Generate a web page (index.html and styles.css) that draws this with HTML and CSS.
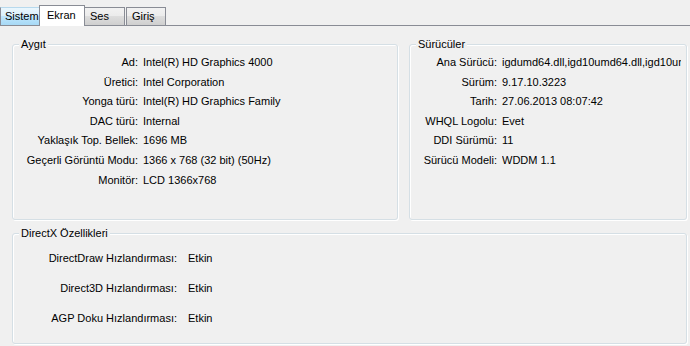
FILE: index.html
```html
<!DOCTYPE html>
<html lang="tr">
<head>
    <meta charset="UTF-8">
    <title>DirectX Tanı Aracı - Ekran</title>
    <link rel="stylesheet" href="styles.css">
</head>
<body>
    <div class="tabs">
        <div class="tab tab-hover">Sistem</div>
        <div class="tab tab-active">Ekran</div>
        <div class="tab tab-ses">Ses</div>
        <div class="tab tab-giris">Giriş</div>
    </div>

    <div class="panel">
        <div class="top-row">
            <div class="group group-device">
                <span class="group-title">Aygıt</span>
                <div class="rows rows-device">
                    <div class="lbl">Ad:</div><div class="val">Intel(R) HD Graphics 4000</div>
                    <div class="lbl">Üretici:</div><div class="val">Intel Corporation</div>
                    <div class="lbl">Yonga türü:</div><div class="val">Intel(R) HD Graphics Family</div>
                    <div class="lbl">DAC türü:</div><div class="val">Internal</div>
                    <div class="lbl">Yaklaşık Top. Bellek:</div><div class="val">1696 MB</div>
                    <div class="lbl">Geçerli Görüntü Modu:</div><div class="val">1366 x 768 (32 bit) (50Hz)</div>
                    <div class="lbl">Monitör:</div><div class="val">LCD 1366x768</div>
                </div>
            </div>
            <div class="group group-drivers">
                <span class="group-title">Sürücüler</span>
                <div class="rows rows-drivers">
                    <div class="lbl">Ana Sürücü:</div><div class="val">igdumd64.dll,igd10umd64.dll,igd10umd64.dll</div>
                    <div class="lbl">Sürüm:</div><div class="val">9.17.10.3223</div>
                    <div class="lbl">Tarih:</div><div class="val">27.06.2013 08:07:42</div>
                    <div class="lbl">WHQL Logolu:</div><div class="val">Evet</div>
                    <div class="lbl">DDI Sürümü:</div><div class="val">11</div>
                    <div class="lbl">Sürücü Modeli:</div><div class="val">WDDM 1.1</div>
                </div>
            </div>
        </div>

        <div class="group group-dx">
            <span class="group-title">DirectX Özellikleri</span>
            <div class="rows rows-dx">
                <div class="lbl">DirectDraw Hızlandırması:</div><div class="val">Etkin</div>
                <div class="lbl">Direct3D Hızlandırması:</div><div class="val">Etkin</div>
                <div class="lbl">AGP Doku Hızlandırması:</div><div class="val">Etkin</div>
            </div>
        </div>
    </div>
</body>
</html>
```

FILE: styles.css
```css
body {
    margin: 0;
    padding: 0;
    background-color: #f0f0f0;
    font-family: "Liberation Sans", Arial, sans-serif;
    font-size: 11px;
    color: #000;
    width: 690px;
    height: 346px;
    overflow: hidden;
}
.tabs {
    display: flex;
    align-items: flex-end;
    height: 25px;
    border-bottom: 1px solid #898c95;
}
.tab {
    box-sizing: border-box;
    height: 18px;
    line-height: 17px;
    padding-left: 5px;
    border: 1px solid #898c95;
    border-bottom: none;
    background: linear-gradient(#f2f2f2 0%, #ebebeb 50%, #dddddd 50%, #cfcfcf 100%);
    margin-bottom: 0;
}
.tab-hover {
    width: 40px;
    padding-left: 4px;
    border-top-color: #b7d9ed;
    background: linear-gradient(#eaf6fd 0%, #d9f0fc 50%, #bee6fd 50%, #a7d9f5 100%);
}
.tab-active {
    width: 46px;
    height: 21px;
    margin-left: -1px;
    margin-bottom: -1px;
    padding-left: 7px;
    line-height: 19px;
    background: #fff;
    position: relative;
}
.tab-ses {
    width: 41px;
    margin-left: -1px;
}
.tab-giris {
    width: 40px;
    margin-left: 1px;
}
.panel {
    padding: 18px 3px 0 12px;
}
.top-row {
    display: grid;
    grid-template-columns: 386px 278px;
    column-gap: 11px;
}
.group {
    position: relative;
    box-sizing: border-box;
    border: 1px solid #d5dfe5;
    border-radius: 3px;
    box-shadow: inset 1px 1px 0 #fff, 1px 1px 0 #fff;
}
.group-title {
    position: absolute;
    top: -7px;
    left: 6px;
    padding: 0 2px;
    line-height: 13px;
    background-color: #f0f0f0;
}
.group-device,
.group-drivers {
    height: 176px;
}
.group-dx {
    margin-top: 13px;
    height: 111px;
}
.rows {
    display: grid;
    white-space: nowrap;
}
.lbl {
    text-align: right;
}
.val {
    overflow: hidden;
}
.rows-device {
    grid-template-columns: 125px 1fr;
    grid-auto-rows: 19.6px;
    line-height: 19.6px;
    column-gap: 5px;
    padding-top: 8px;
}
.rows-drivers {
    grid-template-columns: 87px 1fr;
    grid-auto-rows: 19.6px;
    line-height: 19.6px;
    column-gap: 5px;
    padding: 8px 5px 0 0;
}
.rows-dx {
    grid-template-columns: 164px 1fr;
    grid-auto-rows: 30px;
    line-height: 30px;
    column-gap: 11px;
    padding-top: 9px;
}
```
